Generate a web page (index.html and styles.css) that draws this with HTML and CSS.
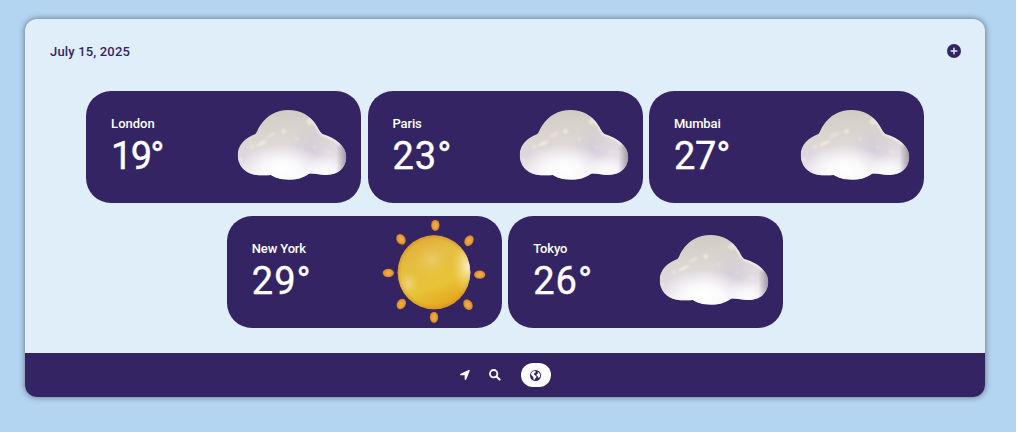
FILE: index.html
```html
<!DOCTYPE html>
<html lang="en">
<head>
<meta charset="utf-8">
<title>Weather</title>
<link rel="stylesheet" href="styles.css">
</head>
<body>
<svg class="defs" aria-hidden="true">
  <defs>
    <linearGradient id="cloudBase" x1="0.4" y1="0" x2="0.5" y2="1">
      <stop offset="0" stop-color="#cecac4"/><stop offset=".35" stop-color="#dad5cf"/><stop offset=".6" stop-color="#e1dae0"/><stop offset=".85" stop-color="#f0ebf2"/><stop offset="1" stop-color="#f8f5fb"/>
    </linearGradient>
    <radialGradient id="cloudGlow"><stop offset="0" stop-color="#fff"/><stop offset=".35" stop-color="#fff" stop-opacity=".8"/><stop offset="1" stop-color="#fff" stop-opacity="0"/></radialGradient>
    <radialGradient id="cloudShade"><stop offset="0" stop-color="#c6bcd6" stop-opacity=".4"/><stop offset="1" stop-color="#c6bcd6" stop-opacity="0"/></radialGradient>
    <linearGradient id="cloudEdge"><stop offset=".91" stop-color="#77727c" stop-opacity="0"/><stop offset="1" stop-color="#77727c" stop-opacity=".65"/></linearGradient>
    <filter id="soft" x="-50%" y="-50%" width="200%" height="200%"><feGaussianBlur stdDeviation="3"/></filter>
    <clipPath id="cloudClip"><path d="M38 196C38 162 64 142 91 132C98 125 99 115 106 106C126 76 154 60 190 60C227 60 257 78 273 104C280 114 283 125 292 132C333 144 364 169 364 202C362 235 339 255 304 255C286 255 267 249 252 251C234 264 214 269 191 269C168 269 150 263 138 255C122 256 106 257 88 254C58 249 38 225 38 196Z"/></clipPath>
    <symbol id="cloud" viewBox="0 3 408 336">
      <g clip-path="url(#cloudClip)">
        <path fill="url(#cloudBase)" d="M30 50h345v230H30z"/>
        <ellipse cx="255" cy="178" rx="65" ry="80" fill="url(#cloudShade)"/>
        <ellipse cx="55" cy="215" rx="55" ry="55" fill="url(#cloudShade)" opacity=".4"/>
        <ellipse cx="170" cy="238" rx="130" ry="75" fill="url(#cloudGlow)"/>
        <ellipse cx="300" cy="244" rx="62" ry="50" fill="url(#cloudGlow)" opacity=".75"/>
        <path fill="url(#cloudEdge)" d="M30 50h334v230H30z"/>
        <path d="M252 85C272 98 279 120 290 133C315 140 333 151 347 166" fill="none" stroke="#fff" stroke-width="5" opacity=".85" filter="url(#soft)"/>
        <g fill="#fff5e2" filter="url(#soft)" opacity=".65">
          <ellipse cx="110" cy="160" rx="18" ry="5" transform="rotate(-26 110 160)"/>
          <ellipse cx="139" cy="135" rx="15" ry="5" transform="rotate(-28 139 135)" opacity=".6"/>
          <circle cx="176" cy="124" r="7"/><circle cx="216" cy="147" r="5" opacity=".6"/>
          <circle cx="81" cy="171" r="6" opacity=".7"/><circle cx="48" cy="209" r="5"/>
          <ellipse cx="252" cy="97" rx="10" ry="5" transform="rotate(45 252 97)"/>
          <ellipse cx="312" cy="187" rx="8" ry="4" opacity=".6"/><circle cx="269" cy="172" r="4" opacity=".6"/>
        </g>
      </g>
    </symbol>
    <linearGradient id="sunBase" x1=".3" y1="0" x2=".7" y2="1"><stop offset="0" stop-color="#e1aa34"/><stop offset=".3" stop-color="#e4bd42"/><stop offset=".65" stop-color="#e8c335"/><stop offset="1" stop-color="#e39c18"/></linearGradient>
    <radialGradient id="sunLight"><stop offset="0" stop-color="#fff1dc"/><stop offset=".3" stop-color="#f9e7b2" stop-opacity=".75"/><stop offset="1" stop-color="#f0cf55" stop-opacity="0"/></radialGradient>
    <radialGradient id="sunRim"><stop offset=".88" stop-color="#ca8418" stop-opacity="0"/><stop offset="1" stop-color="#ca8418" stop-opacity=".5"/></radialGradient>
    <radialGradient id="bead"><stop offset="0" stop-color="#efb052"/><stop offset=".65" stop-color="#e89d35"/><stop offset="1" stop-color="#cf7e20"/></radialGradient>
    <clipPath id="sunClip"><ellipse cx="192" cy="187" rx="109" ry="111"/></clipPath>
    <symbol id="sun" viewBox="-12 18 408 336">
      <g clip-path="url(#sunClip)">
        <path fill="url(#sunBase)" d="M80 70h225v235H80z"/>
        <ellipse cx="192" cy="187" rx="110" ry="112" fill="url(#sunRim)"/>
        <ellipse cx="185" cy="150" rx="60" ry="60" fill="url(#sunLight)" opacity=".22"/>
        <ellipse cx="115" cy="221" rx="38" ry="42" fill="url(#sunLight)" opacity=".42"/>
        <ellipse cx="294" cy="168" rx="52" ry="90" fill="url(#sunLight)" opacity=".9"/>
      </g>
      <g fill="url(#bead)">
        <ellipse cx="196" cy="46" rx="12.500" ry="17"/>
        <ellipse cx="93" cy="88" rx="13" ry="17" transform="rotate(-32 93 88)"/>
        <ellipse cx="297" cy="92" rx="13" ry="17" transform="rotate(32 297 92)"/>
        <ellipse cx="55" cy="189" rx="17" ry="12.500"/>
        <ellipse cx="329" cy="194" rx="17" ry="12.500"/>
        <ellipse cx="94" cy="282" rx="13" ry="17" transform="rotate(32 94 282)"/>
        <ellipse cx="294" cy="284" rx="13" ry="17" transform="rotate(-32 294 284)"/>
        <ellipse cx="192" cy="322" rx="12.500" ry="17"/>
      </g>
    </symbol>
  </defs>
</svg>
<main class="panel">
  <header class="topbar">
    <span class="date">July 15, 2025</span>
    <svg class="add" viewBox="0 0 512 512"><path fill="#342463" d="M256 0a256 256 0 1 0 0 512a256 256 0 1 0 0-512z"/><path d="M256 152v208M152 256h208" stroke="#e0eef9" stroke-width="54" stroke-linecap="round"/></svg>
  </header>
  <section class="cities">
    <article class="card"><div class="info"><div class="city">London</div><div class="temp narrow">19°</div></div><svg class="art"><use href="#cloud"/></svg></article>
    <article class="card"><div class="info"><div class="city tight">Paris</div><div class="temp">23°</div></div><svg class="art"><use href="#cloud"/></svg></article>
    <article class="card"><div class="info"><div class="city tight">Mumbai</div><div class="temp snug">27°</div></div><svg class="art"><use href="#cloud"/></svg></article>
    <article class="card"><div class="info"><div class="city tight">New York</div><div class="temp">29°</div></div><svg class="art"><use href="#sun"/></svg></article>
    <article class="card"><div class="info"><div class="city tight">Tokyo</div><div class="temp">26°</div></div><svg class="art"><use href="#cloud"/></svg></article>
  </section>
  <nav class="tabs">
    <span class="tab"><svg class="icon arrow" viewBox="0 0 30 30"><path fill="#fff" d="M29 3L19 28C18 31 14 30 14 27V16H3C0 16-1 12 2 11L26 0C29-1 30 0 29 3Z"/></svg></span>
    <span class="tab"><svg class="icon search" viewBox="0 0 36 36"><circle cx="14" cy="14" r="11" fill="none" stroke="#fff" stroke-width="5.500"/><path d="M22.500 22.500L32 32" stroke="#fff" stroke-width="6" stroke-linecap="round"/></svg></span>
    <span class="tab active"><svg class="icon globe" viewBox="0 0 34 34"><circle cx="17" cy="17" r="17" fill="#342463"/><path fill="#fff" d="M4 9L8 5L15 2L18 5L17 8L13 11L12 14L16 16L20 20L19 24L16 26L14 31L11 29L10 22L6 18L3 13ZM23 7L28 8L31 14L31 19L28 24L25 23L24 19L20 17L21 12L25 11Z"/></svg></span>
  </nav>
</main>
</body>
</html>
```
FILE: styles.css
```css
* { box-sizing: border-box; }
body { margin: 0; padding: 19px 31px 35px 25px; height: 432px; background: #b3d5f1; font-family: Roboto, "Liberation Sans", sans-serif; }
.defs { position: absolute; width: 0; height: 0; }
.panel { display: flex; flex-direction: column; width: 960px; height: 378px; border-radius: 12px; overflow: hidden; background: #e0eef9; box-shadow: 0 0 6px rgba(0, 0, 0, .5); }
.topbar { display: flex; align-items: center; justify-content: space-between; height: 64px; padding: 0 24px 0 25px; color: #342463; }
.date { padding-top: 2px; font-size: 13px; font-weight: 500; letter-spacing: .17px; line-height: 20px; }
.add { width: 14px; height: 14px; }
.cities { flex: 1; display: flex; flex-wrap: wrap; justify-content: center; align-content: flex-start; gap: 13px 6.400px; padding: 8px 60px 0; }
.card { display: flex; justify-content: space-between; width: 275px; height: 112px; padding-left: 25px; border-radius: 25px; background: #342463; color: #fff; }
.info { padding-top: 25px; }
.city { font-size: 13px; font-weight: 500; line-height: 16px; }
.tight { letter-spacing: -.15px; }
.temp { padding-top: 1px; font-size: 38px; font-weight: 400; line-height: 46px; letter-spacing: 1px; -webkit-text-stroke: .4px #fff; }
.snug { letter-spacing: -.2px; }
.narrow { letter-spacing: -1.8px; }
.art { width: 136px; height: 112px; }
.tabs { display: flex; justify-content: center; align-items: center; height: 44px; padding-right: 10px; background: #342463; }
.tab { display: flex; justify-content: center; align-items: center; width: 30px; height: 24px; }
.active { margin-left: 11px; border-radius: 12px; background: #fff; }
.arrow { width: 10px; height: 10px; }
.search { width: 12px; height: 12px; }
.globe { width: 11px; height: 11px; }
```
